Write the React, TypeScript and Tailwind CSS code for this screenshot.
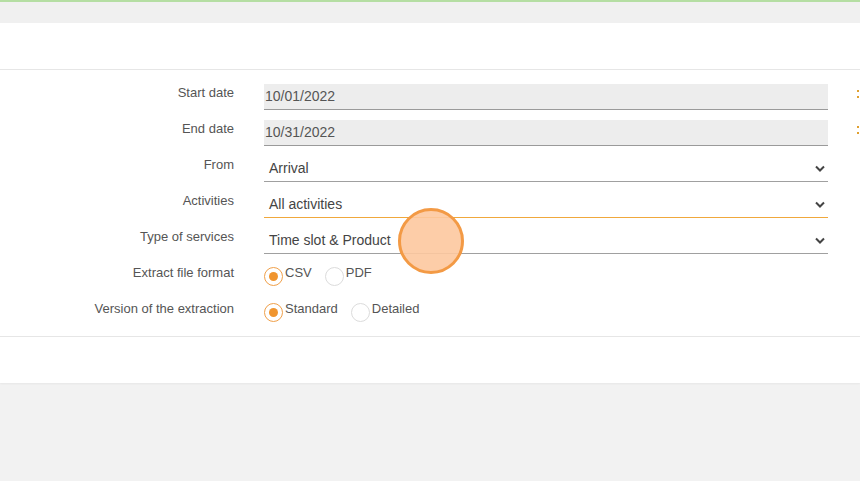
const font = { fontFamily: '"Liberation Sans", Arial, sans-serif' };

function Chevron() {
  return (
    <svg width="10" height="7" viewBox="0 0 10 7" className="shrink-0">
      <polyline points="1,1.5 5,5.5 9,1.5" fill="none" stroke="#444" strokeWidth="2" />
    </svg>
  );
}

function CalMark() {
  return (
    <div className="ml-[29px] flex flex-col gap-[4px] pt-[6px]">
      <span className="block h-[2px] w-[2px] bg-[#e0a030]" />
      <span className="block h-[2px] w-[2px] bg-[#e0a030]" />
    </div>
  );
}

function Radio({ checked, label }: { checked?: boolean; label: string }) {
  return (
    <div className="flex items-start">
      <span
        className={
          checked
            ? "mt-[3px] flex h-[19px] w-[19px] items-center justify-center rounded-full border border-[#f0a04a] bg-white"
            : "mt-[3px] flex h-[19px] w-[19px] items-center justify-center rounded-full border border-[#dcdcdc] bg-white"
        }
      >
        {checked && <span className="block h-[9px] w-[9px] rounded-full bg-[#f0952f]" />}
      </span>
      <span className="ml-[2px] pt-[1px] text-[13px] leading-[16px] text-[#555]">{label}</span>
    </div>
  );
}

function Row({ label, children }: { label: string; children: React.ReactNode }) {
  return (
    <div className="flex h-[26px] items-start">
      <div className="w-[234px] pt-[1px] text-right text-[13px] leading-[16px] text-[#555]">{label}</div>
      <div className="ml-[30px] flex">{children}</div>
    </div>
  );
}

function DateInput({ value }: { value: string }) {
  return (
    <div className="flex h-[26px] w-[564px] items-center border-b border-[#9a9a9a] bg-[#ededed] pl-[1px] text-[14px] text-[#555]">
      {value}
    </div>
  );
}

function Select({ value, active }: { value: string; active?: boolean }) {
  return (
    <div
      className={
        active
          ? "flex h-[26px] w-[564px] items-center justify-between border-b border-[#f0a83c] pl-[5px] pr-[3px] text-[14px] text-[#444]"
          : "flex h-[26px] w-[564px] items-center justify-between border-b border-[#a0a0a0] pl-[5px] pr-[3px] text-[14px] text-[#444]"
      }
    >
      <span>{value}</span>
      <Chevron />
    </div>
  );
}

export default function App() {
  return (
    <div className="relative flex h-[481px] w-full flex-col overflow-hidden bg-[#f2f2f2]" style={font}>
      <div className="h-[2px] bg-[#b5dea3]" />
      <div className="h-[21px] bg-[#f0f0f0]" />
      <div className="flex flex-col bg-white shadow-[0_1px_2px_rgba(0,0,0,0.05)]">
        <div className="h-[47px] border-b border-[#e6e6e6]" />
        <div className="flex flex-col gap-[10px] border-b border-[#e6e6e6] pb-[10px] pt-[14px]">
          <Row label="Start date">
            <DateInput value="10/01/2022" />
            <CalMark />
          </Row>
          <Row label="End date">
            <DateInput value="10/31/2022" />
            <CalMark />
          </Row>
          <Row label="From">
            <Select value="Arrival" />
          </Row>
          <Row label="Activities">
            <Select value="All activities" active />
          </Row>
          <Row label="Type of services">
            <Select value="Time slot & Product" />
          </Row>
          <Row label="Extract file format">
            <div className="flex gap-[13px]">
              <Radio checked label="CSV" />
              <Radio label="PDF" />
            </div>
          </Row>
          <Row label="Version of the extraction">
            <div className="flex gap-[13px]">
              <Radio checked label="Standard" />
              <Radio label="Detailed" />
            </div>
          </Row>
        </div>
        <div className="h-[46px]" />
      </div>
      <div className="absolute left-[398px] top-[208px] h-[66px] w-[66px] rounded-full border-[3px] border-[#f39a45] bg-[#fdc89e]/90" />
    </div>
  );
}
